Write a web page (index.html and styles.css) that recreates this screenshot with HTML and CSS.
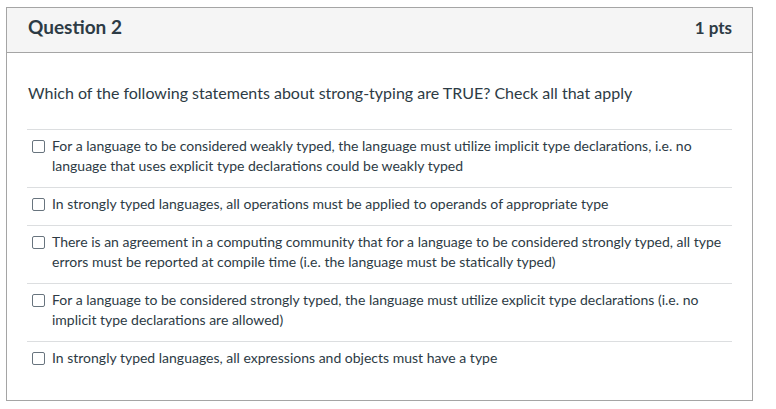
FILE: index.html
```html
<!DOCTYPE html>
<html>
<head>
<meta charset="utf-8">
<link rel="stylesheet" href="styles.css">
</head>
<body>
<div class="question">
  <div class="header">
    <span class="title">Question 2</span>
    <span class="points">1 pts</span>
  </div>
  <div class="content">
    <div class="prompt">Which of the following statements about strong-typing are TRUE? Check all that apply</div>
    <div class="answers">
      <label class="answer"><span class="box"></span><span class="text">For a language to be considered weakly typed, the language must utilize implicit type declarations, i.e. no language that uses explicit type declarations could be weakly typed</span></label>
      <label class="answer"><span class="box"></span><span class="text">In strongly typed languages, all operations must be applied to operands of appropriate type</span></label>
      <label class="answer"><span class="box"></span><span class="text">There is an agreement in a computing community that for a language to be considered strongly typed, all type errors must be reported at compile time (i.e. the language must be statically typed)</span></label>
      <label class="answer"><span class="box"></span><span class="text">For a language to be considered strongly typed, the language must utilize explicit type declarations (i.e. no implicit type declarations are allowed)</span></label>
      <label class="answer"><span class="box"></span><span class="text">In strongly typed languages, all expressions and objects must have a type</span></label>
    </div>
  </div>
</div>
</body>
</html>
```
FILE: styles.css
```css
html, body {
  margin: 0;
  padding: 0;
  background: #ffffff;
}
body {
  font-family: Lato, "Liberation Sans", sans-serif;
  color: #2d3b45;
}
.question {
  margin: 7px 0 0 6px;
  width: 747px;
  height: 394px;
  box-sizing: border-box;
  border: 1px solid #a5a5a5;
}
.header {
  display: flex;
  justify-content: space-between;
  align-items: baseline;
  box-sizing: border-box;
  background: #f5f5f5;
  border-bottom: 1px solid #a5a5a5;
  padding: 7px 20px 0 21px;
  height: 45px;
}
.title {
  font-size: 19px;
  font-weight: 700;
}
.points {
  font-size: 17px;
  font-weight: 700;
}
.content {
  padding: 29px 20px 20px 20px;
}
.prompt {
  font-size: 16px;
  line-height: 24px;
  padding-left: 1px;
  margin-top: -1px;
  margin-bottom: 1px;
}
.answers {
  margin-top: 24px;
}
.answer {
  display: flex;
  align-items: flex-start;
  gap: 7px;
  border-top: 1px solid #dcdee0;
  padding: 6px 0 11px 5px;
  font-size: 14px;
  line-height: 20px;
}
.box {
  flex: none;
  width: 13px;
  height: 13px;
  box-sizing: border-box;
  border: 1px solid #68747e;
  border-radius: 2px;
  margin-top: 4px;
  background: #fff;
}
.text {
  flex: 1;
}
```
